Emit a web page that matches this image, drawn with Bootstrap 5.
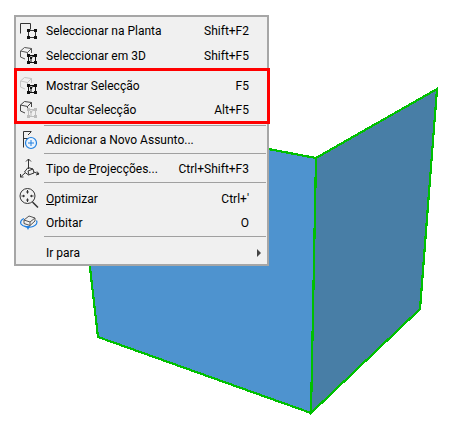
<!DOCTYPE html>
<html lang="pt">
<head>
    <meta charset="UTF-8">
    <meta name="viewport" content="width=device-width, initial-scale=1.0">
    <title>Menu de contexto</title>
    <link href="https://cdn.jsdelivr.net/npm/bootstrap@5.3.0/dist/css/bootstrap.min.css" rel="stylesheet">
    <style>
        body { background: #fff; width: 451px; height: 425px; overflow: hidden; }
        .scene { position: absolute; top: 0; left: 0; }
        .ctx-menu.dropdown-menu {
            position: absolute; top: 15px; left: 14px; width: 255px; height: 251px; min-width: 0;
            padding: 2px 0 0; margin: 0;
            background: #f0f0f0; border: 2px solid #a6a6a6; border-radius: 0;
            font: 12px/24px Roboto, sans-serif; color: #000;
        }
        .ctx-menu .dropdown-item {
            height: 24.5px; padding: 0 18px 0 2px; color: #000; line-height: 24px;
            display: flex; align-items: center; gap: 4px; background: none;
        }
        .ctx-menu svg.ico { flex: none; width: 24px; height: 24px; }
        .ctx-menu .keys { margin-left: auto; }
        .ctx-menu .dropdown-divider { margin: .5px 1px 3.5px 28px; border-top: 1px solid #a0a0a0; opacity: 1; height: 0; }
        .ctx-menu .sep-low { margin: 2.5px 1px 1.5px 28px; }
        .ctx-menu .gap-first { height: 5.5px; }
        .ico-gap { flex: none; width: 24px; }
        .sub-arrow { position: absolute; right: 6px; top: 0; width: 0; height: 0; margin-top: 8px;
            border-left: 4px solid #444; border-top: 4px solid transparent; border-bottom: 4px solid transparent; }
        .red-frame { position: absolute; left: -2px; top: 51px; width: 256px; height: 56px; border: 3px solid #f00; pointer-events: none; }
    </style>
</head>
<body>
    <svg class="scene" width="451" height="425" shape-rendering="crispEdges">
        <polygon points="72,112 316,158 311,413 98,337" fill="#4e93cf" stroke="#00c000" stroke-width="2.2"/>
        <polygon points="316,158 437,89 420,309 311,413" fill="#487ea6" stroke="#00c000" stroke-width="2.2"/>
    </svg>

    <svg width="0" height="0" class="position-absolute">
        <defs>
            <g id="nodes">
                <path d="M10.5 11.5h7v7h-7z M10.5 11.5l2.5 2 4.5-2 M13 14v4.5" fill="none" stroke="currentColor"/>
                <path d="M9 10h3v3H9z M16 10h3v3h-3z M9 17h3v3H9z M16 17h3v3h-3z M12 13h2v2h-2z" fill="currentColor"/>
            </g>
            <path id="ghost" d="M2.5 13V7L6.5 3.5 13.5 4.5V9M2.5 7 9.5 8.5V10M9.5 8.5 13.5 4.5M2.5 13 7 15" fill="none" stroke="currentColor"/>
        </defs>
    </svg>

    <ul class="dropdown-menu show ctx-menu list-unstyled">
        <li><a class="dropdown-item" href="#">
            <svg class="ico" viewBox="0 0 24 24" fill="none" stroke="#333"><path d="M2.5 14.5v-10h10v6"/><path d="M10.5 11.5h7v7h-7z"/><path d="M9 10h3v3H9zM16 10h3v3h-3zM9 17h3v3H9zM16 17h3v3h-3z" fill="#111" stroke="none"/></svg>
            <span>Seleccionar na Planta</span><span class="keys">Shift+F2</span></a></li>
        <li><a class="dropdown-item" href="#">
            <svg class="ico" viewBox="0 0 24 24" color="#111"><use href="#ghost" color="#555"/><use href="#nodes"/></svg>
            <span>Seleccionar em 3D</span><span class="keys">Shift+F5</span></a></li>
        <li class="gap-first"></li>
        <li><a class="dropdown-item" href="#">
            <svg class="ico" viewBox="0 0 24 24" color="#111"><use href="#ghost" color="#c4c4c4"/><use href="#nodes"/></svg>
            <span>Mostrar Selecção</span><span class="keys">F5</span></a></li>
        <li><a class="dropdown-item" href="#">
            <svg class="ico" viewBox="0 0 24 24" color="#bdbdbd"><use href="#ghost" color="#444"/><use href="#nodes"/></svg>
            <span>Ocultar Selecção</span><span class="keys">Alt+F5</span></a></li>
        <li><hr class="dropdown-divider sep-low"></li>
        <li><a class="dropdown-item" href="#">
            <svg class="ico" viewBox="0 0 24 24" fill="none"><path d="M5.5 19.5V3.5h8M5.5 10.5h5M10 7l3-3" stroke="#333"/><circle cx="13" cy="15" r="5.5" stroke="#1f7fe0" stroke-width="1.2" fill="#eaf3fc"/><path d="M13 12v6M10 15h6" stroke="#1f7fe0"/></svg>
            <span>Adicionar a Novo Assunto...</span></a></li>
        <li><hr class="dropdown-divider"></li>
        <li><a class="dropdown-item" href="#">
            <svg class="ico" viewBox="0 0 24 24" fill="none" stroke="#333"><path d="M10.5 12V2M8 4.5 10.5 2 13 4.5"/><path d="M6.5 15 10 10.5l5 1.5 1 4-5.5 2z M10 14l5-2M10 14l1 4"/><path d="M7 16 2.5 20M2.5 17v3h3M16 15l5 2M19 14.5l2 2.5-3 1"/></svg>
            <span>Tipo de <u>P</u>rojecções...</span><span class="keys">Ctrl+Shift+F3</span></a></li>
        <li><hr class="dropdown-divider"></li>
        <li><a class="dropdown-item" href="#">
            <svg class="ico" viewBox="0 0 24 24" fill="none" stroke="#333"><circle cx="9.5" cy="9" r="7.5"/><path d="M14.5 15 20 20.5" stroke-width="1.5"/><path d="M9.5 3v3M9.5 15v-3M3.5 9h3M15.5 9h-3"/><path d="M8 4.5h3L9.5 7zM8 13.5h3L9.5 11zM5 7.5v3L7 9zM14 7.5v3L12 9z" fill="#333" stroke="none"/></svg>
            <span><u>O</u>ptimizar</span><span class="keys">Ctrl+'</span></a></li>
        <li><a class="dropdown-item" href="#">
            <svg class="ico" viewBox="0 0 24 24" fill="none"><path d="M6 9 11 5l6 2v3l-5 4.5-6-2zM6 9l6 2 5-4M12 11v3.5" stroke="#555"/><path d="M6 7.5C3 9 2 11 3 13c1.500 2.500 8 4 12 2.500 3-1.200 5-3.500 3.500-6" stroke="#1f7fe0" stroke-width="1.3"/><path d="M8 15h4l-2 4z" fill="#1f7fe0"/></svg>
            <span>Orbitar</span><span class="keys">O</span></a></li>
        <li><hr class="dropdown-divider"></li>
        <li class="position-relative"><a class="dropdown-item" href="#">
            <span class="ico-gap"></span>
            <span>Ir para</span></a><span class="sub-arrow"></span></li>
        <li class="red-frame"></li>
    </ul>

    <script src="https://cdn.jsdelivr.net/npm/bootstrap@5.3.0/dist/js/bootstrap.bundle.min.js"></script>
</body>
</html>
